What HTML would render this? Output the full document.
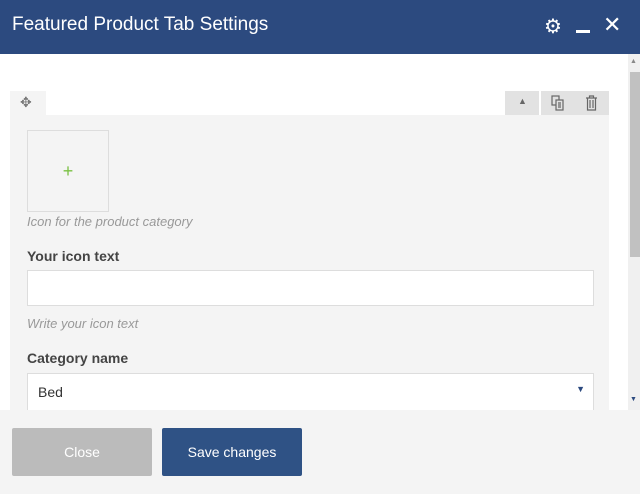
<!DOCTYPE html>
<html><head><style>
*{margin:0;padding:0;box-sizing:border-box}
body{width:640px;height:494px;overflow:hidden;background:#fff;font-family:"Liberation Sans",sans-serif;position:relative}
.hdr{position:absolute;left:0;top:0;width:640px;height:54px;background:#2c4a7f}
.hdr .t{position:absolute;left:12px;top:14px;color:#fff;font-size:19px}
.body{position:absolute;left:0;top:54px;width:628px;height:356px;background:#fff}
.sb{position:absolute;left:628px;top:54px;width:12px;height:356px;background:#f0f0f0}
.thumb{position:absolute;left:630px;top:72px;width:10px;height:185px;background:#c1c1c1}
.panel{position:absolute;left:10px;top:115px;width:599px;height:295px;background:#f4f4f4}
.tab{position:absolute;left:10px;top:91px;width:36px;height:24px;background:#f4f4f4}
.btnr{position:absolute;top:91px;width:34px;height:24px;background:#e2e2e2}
.iconbox{position:absolute;left:27px;top:130px;width:82px;height:82px;border:1px solid #ddd;background:#f4f4f4;color:#7ac143;font-size:18px;text-align:center;line-height:80px}
.help{position:absolute;left:27px;color:#999;font-style:italic;font-size:13px}
.lbl{position:absolute;left:27px;color:#444;font-size:14px;font-weight:bold}
.inp{position:absolute;left:27px;width:567px;height:36px;background:#fff;border:1px solid #ddd}
.foot{position:absolute;left:0;top:410px;width:640px;height:84px;background:#f4f4f4}
.b{position:absolute;top:428px;height:48px;width:140px;border-radius:2px;color:#fff;font-size:14px;text-align:center;line-height:48px}
</style></head><body>
<div class="hdr"><div class="t">Featured Product Tab Settings</div>
<div style="position:absolute;left:544px;top:14px;color:#fff;font-size:20px">⚙</div>
<div style="position:absolute;left:576px;top:30px;width:14px;height:3px;background:#fff"></div>
<div style="position:absolute;left:603px;top:12px;color:#fff;font-size:22px">✕</div>
</div>
<div class="body"></div>
<div class="sb"></div><div class="thumb"></div>
<div style="position:absolute;left:630px;top:58px;font-size:7px;color:#888">▲</div>
<div style="position:absolute;left:630px;top:396px;font-size:7px;color:#2c4a7f">▼</div>
<div class="tab"><span style="position:absolute;left:10px;top:3px;font-size:14px;color:#777">✥</span></div>
<div class="btnr" style="left:505px"><span style="position:absolute;left:13px;top:5px;font-size:9px;color:#666">▲</span></div>
<div class="btnr" style="left:541px"><svg style="position:absolute;left:10px;top:4px" width="13" height="16" viewBox="0 0 13 16" fill="none" stroke="#666" stroke-width="1.2"><rect x="1" y="1" width="7" height="9"/><rect x="5" y="5" width="7" height="10" fill="#e2e2e2"/><path d="M7 8h3M7 10h3M7 12h3"/></svg></div>
<div class="btnr" style="left:575px"><svg style="position:absolute;left:10px;top:4px" width="13" height="16" viewBox="0 0 13 16" fill="none" stroke="#666" stroke-width="1.2"><path d="M1 3h11M4.5 3V1h4v2M2.5 3v12h8V3M5 5v8M8 5v8"/></svg></div>
<div class="panel"></div>
<div class="iconbox">+</div>
<div class="help" style="top:214px">Icon for the product category</div>
<div class="lbl" style="top:248px">Your icon text</div>
<div class="inp" style="top:270px"></div>
<div class="help" style="top:316px">Write your icon text</div>
<div class="lbl" style="top:350px">Category name</div>
<div class="inp" style="top:373px;height:37px;border-bottom:none"><span style="position:absolute;left:10px;top:10px;font-size:14px;color:#333">Bed</span><span style="position:absolute;right:8px;top:10px;font-size:9px;color:#2c4a7f">▼</span></div>
<div class="foot"></div>
<div class="b" style="left:12px;background:#bbb">Close</div>
<div class="b" style="left:162px;background:#2f5285">Save changes</div>
</body></html>
